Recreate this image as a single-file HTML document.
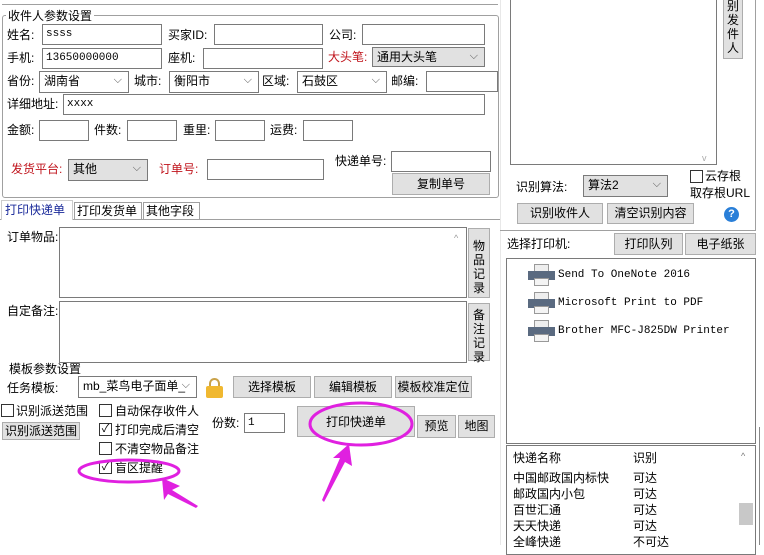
<!DOCTYPE html>
<html><head><meta charset="utf-8"><style>
body{margin:0;width:764px;height:545px;background:#fff;position:relative;overflow:hidden;font-family:"Liberation Sans","Noto Sans CJK SC",sans-serif;font-size:12px;color:#000}
div,span{position:absolute;box-sizing:border-box}
.l{white-space:nowrap;line-height:16px}
.r{color:#c0141c}
.in{background:#fff;border:1px solid #7a7a7a;font-family:"Liberation Mono","Noto Sans CJK SC",monospace;font-size:11px;padding:2px 3px;line-height:15px;white-space:nowrap}
.sel{background:#fff;border:1px solid #7a7a7a;padding:1px 4px;line-height:17px;white-space:nowrap}
.sel::after{content:"⌵";position:absolute;right:6px;top:0;font-size:11px;color:#555}
.g{background:#e1e1e1}
.b{background:#e1e1e1;border:1px solid #adadad;text-align:center;white-space:nowrap;line-height:18px}
.box{border:1px solid #a0a0a0}
.cb{width:13px;height:13px;border:1px solid #333;background:#fff;font-size:11px;line-height:11px;text-align:center}
.vb{background:#e1e1e1;border:1px solid #adadad;text-align:center;line-height:14px;padding-top:10px}
</style></head><body>
<div style="left:2px;top:4px;width:496px;height:1px;background:#a0a0a0"></div>
<div class="box" style="left:2px;top:15px;width:497px;height:183px;border-radius:3px"></div>
<span class="l" style="left:6px;top:8px;background:#fff;padding:0 2px">收件人参数设置</span>
<span class="l" style="left:7px;top:27px">姓名:</span><div class="in" style="left:42px;top:24px;width:120px;height:21px">ssss</div>
<span class="l" style="left:168px;top:27px">买家ID:</span><div class="in" style="left:214px;top:24px;width:109px;height:21px"></div>
<span class="l" style="left:329px;top:27px">公司:</span><div class="in" style="left:362px;top:24px;width:123px;height:21px"></div>
<span class="l" style="left:7px;top:50px">手机:</span><div class="in" style="left:42px;top:48px;width:120px;height:21px">13650000000</div>
<span class="l" style="left:168px;top:50px">座机:</span><div class="in" style="left:203px;top:48px;width:120px;height:21px"></div>
<span class="l r" style="left:328px;top:49px">大头笔:</span><div class="sel g" style="left:372px;top:47px;width:113px;height:20px">通用大头笔</div>
<span class="l" style="left:7px;top:73px">省份:</span><div class="sel" style="left:39px;top:71px;width:90px;height:22px">湖南省</div>
<span class="l" style="left:134px;top:73px">城市:</span><div class="sel" style="left:169px;top:71px;width:90px;height:22px">衡阳市</div>
<span class="l" style="left:262px;top:73px">区域:</span><div class="sel" style="left:297px;top:71px;width:90px;height:22px">石鼓区</div>
<span class="l" style="left:391px;top:73px">邮编:</span><div class="in" style="left:426px;top:71px;width:72px;height:21px"></div>
<span class="l" style="left:7px;top:96px">详细地址:</span><div class="in" style="left:63px;top:94px;width:422px;height:21px">xxxx</div>
<span class="l" style="left:7px;top:122px">金额:</span><div class="in" style="left:39px;top:120px;width:50px;height:21px"></div>
<span class="l" style="left:94px;top:122px">件数:</span><div class="in" style="left:127px;top:120px;width:50px;height:21px"></div>
<span class="l" style="left:183px;top:122px">重里:</span><div class="in" style="left:215px;top:120px;width:50px;height:21px"></div>
<span class="l" style="left:270px;top:122px">运费:</span><div class="in" style="left:303px;top:120px;width:50px;height:21px"></div>
<span class="l r" style="left:11px;top:161px">发货平台:</span><div class="sel g" style="left:68px;top:159px;width:80px;height:22px">其他</div>
<span class="l r" style="left:159px;top:161px">订单号:</span><div class="in" style="left:207px;top:159px;width:117px;height:21px"></div>
<span class="l" style="left:335px;top:153px">快递单号:</span><div class="in" style="left:391px;top:151px;width:100px;height:21px"></div>
<div class="b" style="left:392px;top:173px;width:98px;height:22px;line-height:20px">复制单号</div>
<div style="left:0;top:219px;width:500px;height:1px;background:#a0a0a0"></div>
<div style="left:1px;top:200px;width:72px;height:20px;background:#fff;border:1px solid #ccc;border-bottom:none;color:#1a2a9a;padding-left:3px;line-height:18px;white-space:nowrap">打印快递单</div>
<div class="box" style="left:74px;top:202px;width:68px;height:18px;padding-left:2px;line-height:16px;white-space:nowrap">打印发货单</div>
<div class="box" style="left:143px;top:202px;width:57px;height:18px;padding-left:2px;line-height:16px;white-space:nowrap">其他字段</div>
<span class="l" style="left:7px;top:229px">订单物品:</span>
<div class="in" style="left:59px;top:227px;width:408px;height:71px"></div>
<span class="l" style="left:454px;top:230px;font-size:9px;color:#999">^</span>
<div class="vb" style="left:468px;top:228px;width:22px;height:70px">物<br>品<br>记<br>录</div>
<span class="l" style="left:7px;top:303px">自定备注:</span>
<div class="in" style="left:59px;top:301px;width:408px;height:62px"></div>
<div class="vb" style="left:468px;top:303px;width:22px;height:58px;padding-top:4px">备<br>注<br>记<br>录</div>
<span class="l" style="left:9px;top:361px">模板参数设置</span>
<span class="l" style="left:7px;top:380px">任务模板:</span>
<div class="sel" style="left:78px;top:376px;width:119px;height:22px;font-size:12px">mb_菜鸟电子面单_</div>
<div style="left:206px;top:378px;width:17px;height:20px">
<div style="left:3px;top:0;width:11px;height:11px;border:2px solid #c9a24a;border-bottom:none;border-radius:6px 6px 0 0"></div>
<div style="left:0;top:8px;width:17px;height:12px;background:#f0b830;border-radius:2px"></div></div>
<div class="b" style="left:233px;top:376px;width:78px;height:22px;line-height:20px">选择模板</div>
<div class="b" style="left:314px;top:376px;width:78px;height:22px;line-height:20px">编辑模板</div>
<div class="b" style="left:395px;top:376px;width:77px;height:22px;line-height:20px">模板校准定位</div>
<div class="cb" style="left:1px;top:404px"></div><span class="l" style="left:16px;top:403px">识别派送范围</span>
<div class="b" style="left:2px;top:422px;width:78px;height:18px;line-height:16px">识别派送范围</div>
<div class="cb" style="left:99px;top:404px"></div><span class="l" style="left:115px;top:403px">自动保存收件人</span>
<div class="cb" style="left:99px;top:423px">✓</div><span class="l" style="left:115px;top:422px">打印完成后清空</span>
<div class="cb" style="left:99px;top:442px"></div><span class="l" style="left:115px;top:441px">不清空物品备注</span>
<div class="cb" style="left:99px;top:461px">✓</div><span class="l" style="left:115px;top:460px">盲区提醒</span>
<span class="l" style="left:212px;top:415px">份数:</span><div class="in" style="left:244px;top:413px;width:41px;height:20px">1</div>
<div class="b" style="left:297px;top:406px;width:118px;height:31px;line-height:29px"></div>
<span class="l" style="left:326px;top:414px">打印快递单</span>
<div class="b" style="left:417px;top:415px;width:39px;height:23px;line-height:21px">预览</div>
<div class="b" style="left:458px;top:415px;width:37px;height:23px;line-height:21px">地图</div>
<svg style="position:absolute;left:0;top:0" width="764" height="545">
<ellipse cx="129" cy="471" rx="50" ry="11" fill="none" stroke="#e020e0" stroke-width="3"/>
<ellipse cx="361" cy="424" rx="51" ry="21" fill="none" stroke="#e020e0" stroke-width="3"/>
<polygon points="162,478 180,486 172,490 198,506 196,508 168,494 164,500" fill="#e020e0"/>
<polygon points="349,444 352,466 345,462 324,502 322,500 340,458 333,458" fill="#e020e0"/>
</svg>
<div style="left:500px;top:0;width:1px;height:545px;background:#e8e8e8"></div>
<div style="left:755px;top:0;width:1px;height:230px;background:#a0a0a0"></div>
<div class="box" style="left:510px;top:-2px;width:207px;height:167px;border-color:#7a7a7a"></div>
<span class="l" style="left:702px;top:150px;font-size:9px;color:#aaa">v</span>
<div class="vb" style="left:723px;top:-2px;width:20px;height:61px;padding-top:0">别<br>发<br>件<br>人</div>
<span class="l" style="left:516px;top:179px">识别算法:</span>
<div class="sel g" style="left:583px;top:175px;width:85px;height:22px">算法2</div>
<div class="cb" style="left:690px;top:170px"></div><span class="l" style="left:705px;top:168px">云存根</span>
<span class="l" style="left:690px;top:185px">取存根URL</span>
<div class="b" style="left:517px;top:203px;width:86px;height:21px">识别收件人</div>
<div class="b" style="left:607px;top:203px;width:87px;height:21px">清空识别内容</div>
<div style="left:724px;top:207px;width:15px;height:15px;border-radius:50%;background:#2a7fd8;color:#fff;font-size:11px;font-weight:bold;text-align:center;line-height:15px">?</div>
<div style="left:500px;top:230px;width:256px;height:1px;background:#a0a0a0"></div>
<span class="l" style="left:507px;top:236px">选择打印机:</span>
<div class="b" style="left:614px;top:233px;width:69px;height:22px;line-height:20px">打印队列</div>
<div class="b" style="left:685px;top:233px;width:71px;height:22px;line-height:20px">电子纸张</div>
<div class="box" style="left:506px;top:258px;width:250px;height:186px;border-color:#7a7a7a"></div>
<div style="left:528px;top:264px;width:27px;height:22px"><div style="left:6px;top:0;width:15px;height:8px;background:#eee;border:1px solid #999"></div><div style="left:0;top:7px;width:27px;height:9px;background:#5a6a80"></div><div style="left:6px;top:14px;width:15px;height:8px;background:#f4f4f4;border:1px solid #999"></div></div>
<div style="left:528px;top:292px;width:27px;height:22px"><div style="left:6px;top:0;width:15px;height:8px;background:#eee;border:1px solid #999"></div><div style="left:0;top:7px;width:27px;height:9px;background:#5a6a80"></div><div style="left:6px;top:14px;width:15px;height:8px;background:#f4f4f4;border:1px solid #999"></div></div>
<div style="left:528px;top:320px;width:27px;height:22px"><div style="left:6px;top:0;width:15px;height:8px;background:#eee;border:1px solid #999"></div><div style="left:0;top:7px;width:27px;height:9px;background:#5a6a80"></div><div style="left:6px;top:14px;width:15px;height:8px;background:#f4f4f4;border:1px solid #999"></div></div>
<span class="l" style="left:558px;top:267px;font-family:'Liberation Mono',monospace;font-size:11px">Send To OneNote 2016</span>
<span class="l" style="left:558px;top:295px;font-family:'Liberation Mono',monospace;font-size:11px">Microsoft Print to PDF</span>
<span class="l" style="left:558px;top:323px;font-family:'Liberation Mono',monospace;font-size:11px">Brother MFC-J825DW Printer</span>
<div class="box" style="left:506px;top:445px;width:250px;height:110px;border-color:#7a7a7a"></div>
<div style="left:759px;top:427px;width:1px;height:118px;background:#888"></div>
<span class="l" style="left:513px;top:450px">快递名称</span><span class="l" style="left:633px;top:450px">识别</span>
<span class="l" style="left:513px;top:470px">中国邮政国内标快</span><span class="l" style="left:633px;top:470px">可达</span>
<span class="l" style="left:513px;top:486px">邮政国内小包</span><span class="l" style="left:633px;top:486px">可达</span>
<span class="l" style="left:513px;top:502px">百世汇通</span><span class="l" style="left:633px;top:502px">可达</span>
<span class="l" style="left:513px;top:518px">天天快递</span><span class="l" style="left:633px;top:518px">可达</span>
<span class="l" style="left:513px;top:534px">全峰快递</span><span class="l" style="left:633px;top:534px">不可达</span>
<div style="left:739px;top:503px;width:14px;height:22px;background:#c8c8c8"></div>
<span class="l" style="left:741px;top:448px;font-size:9px;color:#777">^</span>
</body></html>
